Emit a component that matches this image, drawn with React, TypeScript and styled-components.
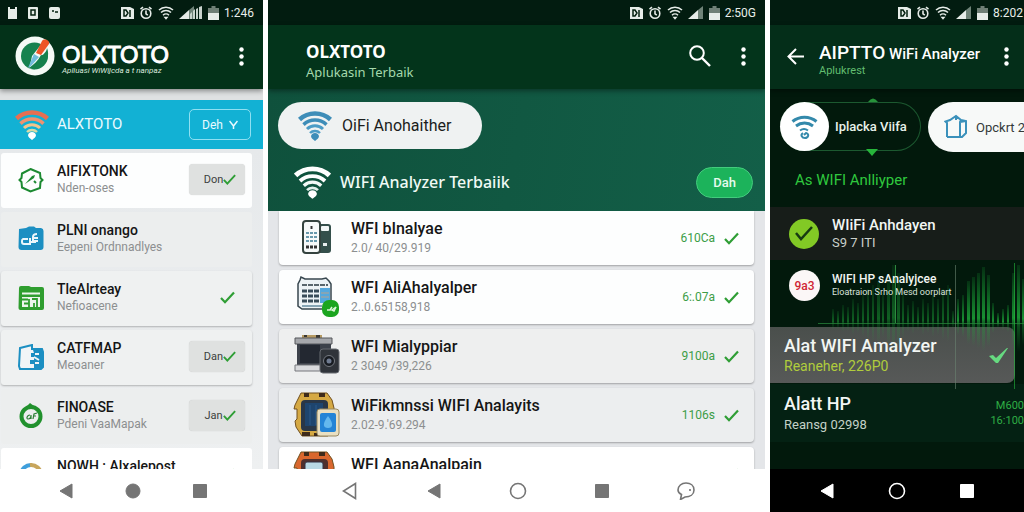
import React from "react";
import styled, { createGlobalStyle, css } from "styled-components";

const GlobalStyle = createGlobalStyle`
  *, *::before, *::after { box-sizing: border-box; }
  body {
    margin: 0;
    background: #fff;
    font-family: Roboto, "Liberation Sans", sans-serif;
    -webkit-font-smoothing: antialiased;
  }
  button { font-family: inherit; padding: 0; border: 0; background: none; color: inherit; cursor: pointer; }
  h1, h2, h3, p, ul { margin: 0; padding: 0; }
  ul { list-style: none; }
  svg { display: block; flex: none; }
`;

/* ---------- shared shell ---------- */

const Screens = styled.main`
  display: grid;
  grid-template-columns: 263fr 497fr 254fr;
  gap: 5px;
  height: 100vh;
  min-height: 320px;
`;

const Phone = styled.section<{ $bg: string }>`
  display: flex;
  flex-direction: column;
  min-width: 0;
  min-height: 0;
  overflow: hidden;
  background: ${(p) => p.$bg};
`;

const StatusBar = styled.div<{ $right?: number }>`
  display: flex;
  flex: none;
  align-items: center;
  gap: 5px;
  height: 25px;
  padding: 0 ${(p) => p.$right ?? 9}px 0 8px;
  background: #021c10;
  color: #e8eeea;
`;

const StatusSpacer = styled.span`
  flex: 1;
`;

const Clock = styled.time`
  font-size: 12px;
  line-height: 16px;
`;

const AppBar = styled.header<{ $bg: string; $pad: string }>`
  position: relative;
  z-index: 1;
  display: flex;
  flex: none;
  align-items: center;
  height: 64px;
  padding: ${(p) => p.$pad};
  background: ${(p) => p.$bg};
  color: #fff;
  box-shadow: 0 2px 5px rgba(0, 0, 0, 0.4);
`;

const Heading = styled.div<{ $pad: string }>`
  flex: 1;
  min-width: 0;
  padding: ${(p) => p.$pad};
  white-space: nowrap;
`;

const IconButton = styled.button<{ $w: number }>`
  display: flex;
  flex: none;
  align-items: center;
  justify-content: center;
  width: ${(p) => p.$w}px;
  height: 32px;
`;

const NavBar = styled.nav<{ $dark?: boolean; $gap: number; $left?: number }>`
  display: flex;
  flex: none;
  align-items: center;
  justify-content: center;
  gap: ${(p) => p.$gap}px;
  height: 43px;
  padding-left: ${(p) => p.$left || 0}px;
  background: ${(p) => (p.$dark ? "#000" : "#fff")};
  color: ${(p) => (p.$dark ? "#fff" : "#757575")};
`;

/* ---------- icons ---------- */

const StatusIcons = ({ double }: { double?: boolean }) => (
  <>
    <svg width="13" height="14" viewBox="0 0 13 14">
      <path d="M0 1h9l4 2v10H0z" fill="#e6ece8" />
      <path d="M3 4v6h2l2-3-2-3zM9 4v7" stroke="#04200f" strokeWidth="1.5" fill="none" />
    </svg>
    <svg width="14" height="14" viewBox="0 0 14 14" fill="none" stroke="#e6ece8" strokeWidth="1.6">
      <circle cx="7" cy="7.5" r="4.8" />
      <path d="M7 4.5v3.3l1.8 1.4M1.5 3.2 4 1.2M12.5 3.2 10 1.2" />
    </svg>
    <svg width="16" height="14" viewBox="0 0 16 14" fill="none" stroke="#e6ece8" strokeWidth="1.5">
      <path d="M1 4a10 10 0 0 1 14 0M3 6.6a7 7 0 0 1 10 0M5 9.2a4.3 4.3 0 0 1 6 0" />
      <path d="m5.5 10.8 2.5 3 2.5-3z" fill="#e6ece8" stroke="none" />
    </svg>
    <svg width={double ? 24 : 16} height="14" viewBox={double ? "0 0 24 14" : "0 0 16 14"}>
      <path d="M0 13 10 4v9z" fill="#e6ece8" />
      <path d="M10 13V4l5-4v13z" fill="#6f8378" />
      {double && <path d="M11 13V8l2-2v7zM14 13V5l2-2v10zM17 13V3l2-1v11zM20 13V1l3-1v13z" fill="#c9d3cd" />}
    </svg>
    <svg width="11" height="14" viewBox="0 0 11 14">
      <path d="M3.5 0h4v2H11v12H0V2h3.5z" fill="#6f7f76" />
      <path d="M0 7h11v7H0z" fill="#e6ece8" />
    </svg>
  </>
);

const LeftNotifications = () => (
  <svg width="54" height="12" viewBox="0 0 54 12">
    <path d="M0 0h2v2h5V0h2v12H0z" fill="#e6ece8" />
    <rect x="20" y="0" width="10" height="12" rx="1" fill="#e6ece8" />
    <rect x="23" y="3" width="4" height="5" fill="none" stroke="#04200f" strokeWidth="1.5" />
    <rect x="41" y="0" width="11" height="12" rx="2" fill="#e6ece8" />
    <path d="M44 4h2M47 5h3" stroke="#04200f" strokeWidth="1.5" />
  </svg>
);

const Dots = () => (
  <svg width="5" height="19" viewBox="0 0 5 19" fill="#fff">
    <circle cx="2.5" cy="2.5" r="2.2" />
    <circle cx="2.5" cy="9.5" r="2.2" />
    <circle cx="2.5" cy="16.5" r="2.2" />
  </svg>
);

const Check = ({ color = "#2f9e35", size = 15 }: { color?: string; size?: number }) => (
  <svg width={size} height={size} viewBox="0 0 15 15" fill="none" stroke={color} strokeWidth="2.2">
    <path d="m1 8 4 4.2L14 2.5" />
  </svg>
);

const Wifi = ({ colors, size = 34 }: { colors: string[]; size?: number }) => (
  <svg width={size} height={Math.round((size * 30) / 34)} viewBox="0 0 34 30" fill="none">
    <path d="M1.5 8.5a23 23 0 0 1 31 0" stroke={colors[0]} strokeWidth="4.5" />
    <path d="M5.5 13.6a17 17 0 0 1 23 0" stroke={colors[1]} strokeWidth="3.5" />
    <path d="M9 18a11.5 11.5 0 0 1 16 0" stroke={colors[2]} strokeWidth="3" />
    <path d="M12 22a7 7 0 0 1 10 0" stroke={colors[3]} strokeWidth="2.5" />
    <path d="M13 25a4.2 4.2 0 0 1 8 0c0 2.5-2 3-4 5-2-2-4-2.5-4-5z" fill={colors[4]} />
  </svg>
);

const Logo = () => (
  <svg width="40" height="40" viewBox="0 0 40 40">
    <circle cx="20" cy="20" r="19.5" fill="#f5faf6" />
    <circle cx="19.5" cy="20" r="13.5" fill="#17824f" />
    <path d="M17 20 29 5l8 6-11 16c-4 3-8 5-12 7z" fill="#f5faf6" />
    <path d="M21 17 27 5c2-3 8-1 7 3l-8 11z" fill="#ee5526" />
    <path d="M26 19c2 1 6-4 6-7 3 7 0 17-8 20-4 2-8 1-10 0 4-3 9-7 12-13z" fill="#14804c" />
    <path d="m19 18 5 3-8 9-3 2z" fill="#72bddc" />
  </svg>
);

const HexIcon = () => (
  <svg width="26" height="26" viewBox="0 0 26 26" fill="none" stroke="#1c8a31" strokeWidth="2">
    <path d="M12.500 2 22 6l.5 5 2 2-2 2-.5 6-9.500 3.500L4 20.500 3.500 15l-2-2 2-2L4 6.500z" />
    <path d="m7 17 7-8 3-1-1 3-6 4z" fill="#1c8a31" stroke="none" />
    <path d="m16 14 2 2" />
  </svg>
);

const BlueFolder = () => (
  <svg width="26" height="25" viewBox="0 0 26 25">
    <path d="M1 3 8 2l3-1.5h5L18 2h5a3 3 0 0 1 2.5 3v16a3 3 0 0 1-3 3h-19A3 3 0 0 1 .5 21z" fill="#1c8fc2" />
    <path d="M10 13H5a2 2 0 0 0-1 2v1a2 2 0 0 0 2 2h6v-6M13 16h2v-5c0-2 1-3 4-3M16 12h4M17 17v-2h3" fill="none" stroke="#eaf6fb" strokeWidth="2" />
  </svg>
);

const GreenCalendar = () => (
  <svg width="26" height="26" viewBox="0 0 26 26">
    <path d="M1 3a2 2 0 0 1 2-2h8l2 1h11a2 2 0 0 1 2 2v19a2 2 0 0 1-2 2H2a2 2 0 0 1-1.5-2z" fill="#2f9e2f" />
    <path d="M4 8.5h18" stroke="#edf5ed" strokeWidth="2" />
    <path d="M4 12h18v10H4z" fill="#edf5ed" />
    <path d="M4 14.5h6M6 18.5h5M11 14v8M14 14h5v8M16 18v4" fill="none" stroke="#2f9e2f" strokeWidth="1.8" />
  </svg>
);

const BlueDocs = () => (
  <svg width="26" height="26" viewBox="0 0 26 26">
    <path d="M2 4 14 1v4h10l1 3v15l-2 2H2L1 22z" fill="#f1f5f7" stroke="#1c8fc2" strokeWidth="2" />
    <path d="M15 6h9v18h-8v-4h-4v-4h4v-3h-3V9h3z" fill="#1c8fc2" />
    <path d="M17 10h4M16 13l5 3M17 19h4" stroke="#f1f5f7" strokeWidth="2" />
  </svg>
);

const GreenRing = () => (
  <svg width="26" height="26" viewBox="0 0 26 26" fill="none">
    <path d="m9 3 3-3 4 3z" fill="#21912d" />
    <circle cx="13" cy="13.5" r="9.5" stroke="#21912d" strokeWidth="4" />
    <path d="M12 12c-3 0-4 4-2 4s3-2 3-4v4M15 16l1-5 3-1M15 13h3" stroke="#2b7e35" strokeWidth="1.2" />
  </svg>
);

const HalfRing = () => (
  <svg width="26" height="26" viewBox="0 0 26 26" fill="none" strokeWidth="4">
    <path d="M3 13A10 10 0 0 1 14 3" stroke="#3f9fdc" />
    <path d="M12 3a10 10 0 0 1 11 10" stroke="#c8a65c" />
    <path d="M3 13a10 10 0 0 0 20 0" stroke="#5fa7c9" />
  </svg>
);

const RemoteArt = () => (
  <svg width="50" height="46" viewBox="0 0 50 46">
    <rect x="27" y="9" width="14" height="29" rx="3" fill="#344f4b" />
    <rect x="31" y="11" width="8" height="5" rx="1" fill="#f2f6f6" />
    <rect x="33" y="28" width="4" height="3" fill="#e8eeee" />
    <rect x="13" y="6" width="17" height="32" rx="3" fill="#f6f9f9" stroke="#34433f" strokeWidth="2" />
    <path d="M21.5 11v3" stroke="#333" strokeWidth="2" />
    <path d="M16 18h11M16 22h11M16 26h11" stroke="#6999ac" strokeWidth="2" strokeDasharray="3 1" />
    <path d="M16 32h11" stroke="#333" strokeWidth="3" strokeDasharray="3 1" />
  </svg>
);

const CalendarArt = () => (
  <svg width="50" height="46" viewBox="0 0 50 46">
    <path d="M10 6 11 3l4 2h17l4-1 3 3 2 3v25H12l-4-3V10z" fill="#edf3f6" stroke="#38474f" strokeWidth="1.5" />
    <path d="M12 11h26" stroke="#59666d" strokeWidth="2" strokeDasharray="5 1" />
    <path d="M30 14h10v15H30z" fill="#55a8dd" />
    <path d="M12 17h17M12 22h17M12 27h17" stroke="#394c59" strokeWidth="3" strokeDasharray="5 1" />
    <path d="M12 32h20M31 19h8M31 23h8" stroke="#86a5b5" strokeWidth="2" />
    <rect x="32" y="26" width="17" height="17" rx="7" fill="#1ba51f" />
    <path d="M37 36h3l2-3M42 36l4-3-2 4z" stroke="#d9f5d5" strokeWidth="1.5" fill="none" />
  </svg>
);

const CameraArt = () => (
  <svg width="50" height="46" viewBox="0 0 50 46">
    <path d="M12 2h20v5H12z" fill="#b69a62" />
    <path d="M14 2h3v2h-3zM26 2h4v3h-4z" fill="#3b3831" />
    <path d="M5 5h37v6H5z" fill="#a5a7ab" stroke="#55565b" />
    <path d="M7 11h34v24H7z" fill="#3c414a" />
    <path d="M10 12h20v18H10z" fill="#232831" />
    <path d="M5 32h27v6H5z" fill="#d9dadd" stroke="#77797d" />
    <rect x="30" y="16" width="19" height="24" rx="3" fill="#30343a" stroke="#666a70" />
    <circle cx="39" cy="28" r="5.5" fill="#171b21" stroke="#777b82" />
    <circle cx="39" cy="28" r="2.5" fill="#707c91" />
  </svg>
);

const WatchArt = ({ orange }: { orange?: boolean }) => {
  const c = orange ? "#d9672e" : "#d5a944";
  return (
    <svg width="50" height="46" viewBox="0 0 50 46">
      <path d="M11 1h26l5 7 2 8v14l-6 14H12L6 35l-1-6 2-2V17H4l1-4z" fill={c} stroke="#71501f" />
      <path d="M14 1h5v4h-5zM29 1h6v4h-6zM12 40h8v4h-8zM24 41h5v3h-5z" fill="#3e2b1b" />
      <rect x="11" y="8" width="27" height="31" rx="4" fill={orange ? "#4f302d" : "#293747"} />
      {orange ? (
        <rect x="15" y="11" width="18" height="14" rx="2" fill="#b9d9e4" stroke="#334" />
      ) : (
        <>
          <path d="M15 11h18v23H15z" fill="#1e456e" />
          <path d="M20 13v20M26 13v20" stroke="#2a5b8a" />
          <rect x="27" y="17" width="22" height="27" rx="3" fill="#e9dfc1" stroke="#998960" />
          <rect x="30" y="21" width="16" height="19" rx="2" fill="#2384d6" />
          <path d="M38 24c6 8 5 12 0 12s-6-4 0-12z" fill="#63b8ee" />
        </>
      )}
    </svg>
  );
};

const NavGlyph = ({ kind }: { kind: "back" | "backOutline" | "home" | "ring" | "square" | "chat" }) => (
  <svg width="18" height="18" viewBox="0 0 18 18" fill="none" stroke="currentColor" strokeWidth="1.6">
    {kind === "back" && <path d="M15 2v14L3 9z" fill="currentColor" strokeWidth="1" />}
    {kind === "backOutline" && <path d="M14.5 1.5v15L2.5 9z" />}
    {kind === "home" && <circle cx="9" cy="9" r="7" fill="currentColor" strokeWidth="1" />}
    {kind === "ring" && <circle cx="9" cy="9" r="7.5" />}
    {kind === "square" && <path d="M2.5 2.5h13v13h-13z" fill="currentColor" strokeWidth="1" />}
    {kind === "chat" && (
      <path d="M4.5 12.500 3.500 17.500 8 15c5 0 9-2.500 9-7s-3.500-7-8-7-8 3-8 7c0 2 1.500 3.500 3.500 4.500zM13 7v2" />
    )}
  </svg>
);

/* ---------- left screen ---------- */

const BrandName = styled.h1`
  font: 400 23px/22px Lato, sans-serif;
  -webkit-text-stroke: 1px #fff;
`;

const BrandTag = styled.p`
  font-size: 8px;
  line-height: 12px;
  font-style: italic;
  color: #dbe8de;
`;

const FeatureBar = styled.div`
  display: flex;
  flex: none;
  align-items: center;
  height: 49px;
  margin-top: 11px;
  padding: 0 12px 0 15px;
  background: #12b1d4;
  color: #eafaff;
`;

const FeatureName = styled.h2`
  flex: 1;
  margin-left: 8px;
  padding-bottom: 2px;
  font-size: 15px;
  line-height: 20px;
  font-weight: 400;
`;

const OutlineButton = styled.button`
  display: flex;
  align-items: center;
  justify-content: center;
  gap: 6px;
  width: 62px;
  height: 31px;
  border: 1px solid #8fe0f2;
  border-radius: 5px;
  font-size: 12px;
`;

const LeftList = styled.ul`
  flex: 1;
  min-height: 0;
  overflow: hidden;
  padding: 4px 11px 0 1px;
  background: linear-gradient(#e6e9eb, #eef0f1);
`;

const AppCard = styled.li<{ $bg: string; $raised?: boolean }>`
  display: flex;
  align-items: center;
  height: 55px;
  margin-bottom: 4px;
  padding: 0 7px 2px 17px;
  border-radius: 3px;
  background: ${(p) => p.$bg};
  ${(p) => p.$raised && css`box-shadow: 0 1px 2px rgba(0, 0, 0, 0.25);`}
`;

const CardText = styled.div<{ $left: number }>`
  flex: 1;
  min-width: 0;
  margin-left: ${(p) => p.$left}px;
  white-space: nowrap;
`;

const AppTitle = styled.h3`
  font-size: 14px;
  line-height: 18px;
  font-weight: 500;
  color: #151515;
`;

const AppSub = styled.p`
  min-height: 17px;
  font-size: 12px;
  line-height: 17px;
  color: #8c8f90;
`;

const DoneButton = styled.button`
  display: flex;
  align-items: center;
  justify-content: center;
  width: 56px;
  height: 31px;
  padding-left: 6px;
  border-radius: 4px;
  background: #dfe1e0;
  box-shadow: 0 0 1px rgba(0, 0, 0, 0.2);
  font-size: 11px;
  color: #3c3f3d;
`;

const CheckSlot = styled.span`
  padding-right: 10px;
`;

/* ---------- middle screen ---------- */

const MidTitle = styled.h1`
  font: 700 17px/20px "Noto Sans", sans-serif;
`;

const MidSub = styled.p`
  font: 400 13px/20px "Noto Sans", sans-serif;
  color: #a5d9ad;
`;

const Hero = styled.div`
  flex: none;
  height: 122px;
  padding: 13px 12px 0 10px;
  background: linear-gradient(100deg, #0f513c, #135f48);
`;

const SearchPill = styled.button`
  display: flex;
  align-items: center;
  gap: 10px;
  width: 204px;
  height: 47px;
  padding-left: 20px;
  border-radius: 24px;
  background: #eff2f2;
  font-size: 16px;
  color: #1b1d1c;
`;

const HeroRow = styled.div`
  display: flex;
  align-items: center;
  height: 68px;
  padding: 0 0 2px 16px;
`;

const HeroTitle = styled.h2`
  flex: 1;
  margin-left: 9px;
  font: 500 16px/24px "Noto Sans", sans-serif;
  color: #f0faf5;
`;

const GreenButton = styled.button`
  width: 57px;
  height: 31px;
  border: 1px solid #43cc7d;
  border-radius: 16px;
  background: #1cb35b;
  font-size: 13px;
  font-weight: 500;
  color: #e6fbee;
`;

const MidList = styled.ul`
  flex: 1;
  min-height: 0;
  overflow: hidden;
  padding: 0 11px;
  background: #e4e6e9;
`;

const ToolCard = styled.li<{ $bg: string }>`
  display: flex;
  align-items: center;
  height: 54px;
  margin-bottom: 5px;
  padding: 0 15px 0 11px;
  border-radius: 4px;
  background: ${(p) => p.$bg};
  box-shadow: 0 1px 2px rgba(0, 0, 0, 0.3);
  &:first-child { border-radius: 0 0 4px 4px; }
`;

const ToolTitle = styled.h3`
  font-size: 16px;
  line-height: 20px;
  font-weight: 500;
  color: #161616;
`;

const ToolSub = styled.p`
  min-height: 18px;
  font-size: 12px;
  line-height: 18px;
  color: #8c8f90;
`;

const Score = styled.span`
  margin-right: 9px;
  font-size: 12px;
  color: #3c9d47;
`;

/* ---------- right screen ---------- */

const RightHeading = styled.h1`
  font-size: 15px;
  line-height: 22px;
  font-weight: 500;
  strong { font-size: 19px; font-weight: 500; }
`;

const RightSub = styled.p`
  font-size: 11px;
  line-height: 12px;
  color: #62bd70;
`;

const ChipRow = styled.div`
  display: flex;
  flex: none;
  gap: 7px;
  height: 76px;
  padding: 13px 0 0 10px;
`;

const DarkChip = styled.button`
  position: relative;
  display: flex;
  flex: none;
  align-items: center;
  width: 141px;
  height: 49px;
  border: 1px solid #1c5930;
  border-left: 0;
  border-radius: 25px;
  font-size: 13px;
  font-weight: 500;
  color: #e8f2ea;
`;

const Disc = styled.span<{ $size: number; $bg: string }>`
  position: relative;
  z-index: 2;
  display: flex;
  flex: none;
  align-items: center;
  justify-content: center;
  width: ${(p) => p.$size}px;
  height: ${(p) => p.$size}px;
  border-radius: 50%;
  background: ${(p) => p.$bg};
  font-size: 12px;
  font-weight: 500;
  color: #d02635;
`;

const ChipLabel = styled.span`
  margin-left: 6px;
  white-space: nowrap;
`;

const Marker = styled.svg<{ $bottom?: boolean }>`
  position: absolute;
  right: 42px;
  ${(p) => (p.$bottom ? "bottom: -6px;" : "top: -5px;")}
`;

const LightChip = styled.button`
  display: flex;
  flex: none;
  align-items: center;
  gap: 8px;
  width: 130px;
  height: 50px;
  padding-left: 16px;
  border-radius: 25px;
  background: #f7f9f8;
  font-size: 13px;
  color: #333a3a;
  white-space: nowrap;
`;

const SectionTitle = styled.h2`
  flex: none;
  height: 42px;
  padding: 5px 0 0 25px;
  font-size: 15px;
  line-height: 20px;
  font-weight: 400;
  color: #2fc83e;
`;

const RightBody = styled.div`
  position: relative;
  flex: 1;
  min-height: 0;
  overflow: hidden;
`;

const Spectrum = styled.svg`
  position: absolute;
  top: 56px;
  right: 0;
  z-index: 1;
  pointer-events: none;
`;

const RightRow = styled.div<{ $h: number; $bg?: string; $pad: number; $lift?: number }>`
  display: flex;
  align-items: center;
  height: ${(p) => p.$h}px;
  padding-left: ${(p) => p.$pad}px;
  padding-bottom: ${(p) => p.$lift || 0}px;
  background: ${(p) => p.$bg || "transparent"};
  white-space: nowrap;
`;

const RowText = styled.div<{ $left?: number }>`
  position: relative;
  z-index: 2;
  flex: 1;
  margin-left: ${(p) => p.$left || 0}px;
`;

const RowTitle = styled.h3<{ $size: number; $line: number }>`
  font-size: ${(p) => p.$size}px;
  line-height: ${(p) => p.$line}px;
  font-weight: 500;
  color: #f2f6f3;
`;

const RowSub = styled.p<{ $size: number; $line: number; $color: string }>`
  font-size: ${(p) => p.$size}px;
  line-height: ${(p) => p.$line}px;
  color: ${(p) => p.$color};
`;

const SelectedRow = styled(RightRow)`
  margin: 4px 9px 1px 0;
  padding-right: 6px;
  border-radius: 0 8px 8px 0;
  background: linear-gradient(#4a4f4c, #575958);
  svg { position: relative; z-index: 2; }
`;

const Prices = styled.p`
  font-size: 11px;
  line-height: 15px;
  text-align: right;
  color: #2fae45;
  span { display: block; }
`;

/* ---------- data ---------- */

const apps = [
  { icon: <HexIcon />, title: "AIFIXTONK", sub: "Nden-oses", bg: "#fdfefe", action: "Don" },
  { icon: <BlueFolder />, title: "PLNI onango", sub: "Eepeni Ordnnadlyes", bg: "#eceeee" },
  { icon: <GreenCalendar />, title: "TleAlrteay", sub: "Nefioacene", bg: "#eff1f1", raised: true, check: true },
  { icon: <BlueDocs />, title: "CATFMAP", sub: "Meoaner", bg: "#eff1f1", raised: true, action: "Dan" },
  { icon: <GreenRing />, title: "FINOASE", sub: "Pdeni VaaMapak", bg: "#eceeee", action: "Jan" },
  { icon: <HalfRing />, title: "NOWH : Alxalepost", sub: "", bg: "#fff", check: true },
];

const tools = [
  { icon: <RemoteArt />, title: "WFI bInalyae", sub: "2.0/ 40/29.919", score: "610Ca", bg: "#fdfefe" },
  { icon: <CalendarArt />, title: "WFI AliAhalyalper", sub: "2..0.65158,918", score: "6:.07a", bg: "#fdfefe" },
  { icon: <CameraArt />, title: "WFI Mialyppiar", sub: "2 3049 /39,226", score: "9100a", bg: "#eeefef" },
  { icon: <WatchArt />, title: "WiFikmnssi WIFI Analayits", sub: "2.02-9.'69.294", score: "1106s", bg: "#eceeef" },
  { icon: <WatchArt orange />, title: "WFI AanaAnalpain", sub: "", score: "990.4s", bg: "#fff" },
];

const peaks = [
  14, 12, 18, 16, 24, 20, 28, 34, 38, 42, 30, 46, 58, 50, 30, 18, 22, 16, 24, 20, 28, 24, 34, 38, 12, 24, 28, 42, 46,
  50, 56, 48, 20, 10, 14, 18, 50, 58, 44,
];

const blues = ["#3d8db8", "#3d8db8", "#4b9cc6", "#4b9cc6", "#3d8db8"];
const whites = ["#fff", "#fff", "#f4faf7", "#e4f1ec", "#fff"];

export default function App() {
  return (
    <>
      <GlobalStyle />
      <Screens>
        <Phone $bg="#dfe1e2">
          <StatusBar>
            <LeftNotifications />
            <StatusSpacer />
            <StatusIcons double />
            <Clock>1:246</Clock>
          </StatusBar>
          <AppBar $bg="#033219" $pad="0 7px 2px 15px">
            <Logo />
            <Heading $pad="7px 0 0 7px">
              <BrandName>OLXTOTO</BrandName>
              <BrandTag>Apliuasi WiWijcda a t nanpaz</BrandTag>
            </Heading>
            <IconButton $w={30} aria-label="More options"><Dots /></IconButton>
          </AppBar>
          <FeatureBar>
            <Wifi colors={["#e66f52", "#ee9270", "#f2c48c", "#d9dba6", "#fff"]} />
            <FeatureName>ALXTOTO</FeatureName>
            <OutlineButton>
              Deh
              <svg width="9" height="9" viewBox="0 0 9 9" fill="none" stroke="currentColor" strokeWidth="1.5">
                <path d="m.5 1 4 5 4-5M4.5 6v3" />
              </svg>
            </OutlineButton>
          </FeatureBar>
          <LeftList>
            {apps.map((a) => (
              <AppCard key={a.title} $bg={a.bg} $raised={a.raised}>
                {a.icon}
                <CardText $left={13}>
                  <AppTitle>{a.title}</AppTitle>
                  <AppSub>{a.sub}</AppSub>
                </CardText>
                {a.action && <DoneButton>{a.action}<Check size={13} /></DoneButton>}
                {a.check && <CheckSlot><Check /></CheckSlot>}
              </AppCard>
            ))}
          </LeftList>
          <NavBar $gap={49} $left={3}>
            <IconButton $w={18} aria-label="Back"><NavGlyph kind="back" /></IconButton>
            <IconButton $w={18} aria-label="Home"><NavGlyph kind="home" /></IconButton>
            <IconButton $w={18} aria-label="Recent apps"><NavGlyph kind="square" /></IconButton>
          </NavBar>
        </Phone>

        <Phone $bg="#e4e6e9">
          <StatusBar>
            <StatusSpacer />
            <StatusIcons />
            <Clock>2:50G</Clock>
          </StatusBar>
          <AppBar $bg="#03341b" $pad="0 7px 2px 38px">
            <Heading $pad="12px 0 0 0">
              <MidTitle>OLXTOTO</MidTitle>
              <MidSub>Aplukasin Terbaik</MidSub>
            </Heading>
            <IconButton $w={56} aria-label="Search">
              <svg width="22" height="22" viewBox="0 0 22 22" fill="none" stroke="#fff" strokeWidth="2">
                <circle cx="8" cy="8" r="6.8" />
                <path d="m13 13 8 8" strokeWidth="2.4" />
              </svg>
            </IconButton>
            <IconButton $w={30} aria-label="More options"><Dots /></IconButton>
          </AppBar>
          <Hero>
            <SearchPill><Wifi colors={blues} />OiFi Anohaither</SearchPill>
            <HeroRow>
              <Wifi colors={whites} size={37} />
              <HeroTitle>WIFI Analyzer Terbaiik</HeroTitle>
              <GreenButton>Dah</GreenButton>
            </HeroRow>
          </Hero>
          <MidList>
            {tools.map((t) => (
              <ToolCard key={t.title} $bg={t.bg}>
                {t.icon}
                <CardText $left={11}>
                  <ToolTitle>{t.title}</ToolTitle>
                  <ToolSub>{t.sub}</ToolSub>
                </CardText>
                <Score>{t.score}</Score>
                <Check />
              </ToolCard>
            ))}
          </MidList>
          <NavBar $gap={66} $left={2}>
            <IconButton $w={18} aria-label="Previous"><NavGlyph kind="backOutline" /></IconButton>
            <IconButton $w={18} aria-label="Back"><NavGlyph kind="back" /></IconButton>
            <IconButton $w={18} aria-label="Home"><NavGlyph kind="ring" /></IconButton>
            <IconButton $w={18} aria-label="Recent apps"><NavGlyph kind="square" /></IconButton>
            <IconButton $w={18} aria-label="Messages"><NavGlyph kind="chat" /></IconButton>
          </NavBar>
        </Phone>

        <Phone $bg="#02190c">
          <StatusBar $right={1}>
            <StatusSpacer />
            <StatusIcons />
            <Clock>8:202</Clock>
          </StatusBar>
          <AppBar $bg="#042e19" $pad="0 3px 2px 9px">
            <IconButton $w={32} aria-label="Back">
              <svg width="17" height="17" viewBox="0 0 17 17" fill="none" stroke="#fff" strokeWidth="2">
                <path d="M9 1 1.5 8.5 9 16M1.5 8.5H17" />
              </svg>
            </IconButton>
            <Heading $pad="7px 0 0 8px">
              <RightHeading><strong>AIPTTO</strong> WiFi Analyzer</RightHeading>
              <RightSub>Aplukrest</RightSub>
            </Heading>
            <IconButton $w={30} aria-label="More options"><Dots /></IconButton>
          </AppBar>
          <ChipRow>
            <DarkChip>
              <Disc $size={49} $bg="#fff">
                <svg width="27" height="24" viewBox="0 0 27 24" fill="none" stroke="#3389ab" strokeWidth="3">
                  <path d="M1.5 6.5a19 19 0 0 1 24 0M5 11a14 14 0 0 1 17 0" />
                  <path d="M9 15.5q4-3 8 0M12 18c-3 2-1 5 2 5s5-4 1-5l-2 2" strokeWidth="2" />
                </svg>
              </Disc>
              <ChipLabel>Iplacka Viifa</ChipLabel>
              <Marker width="10" height="4" viewBox="0 0 10 4"><path d="M0 4q5-7 10 0z" fill="#27923a" /></Marker>
              <Marker $bottom width="12" height="7" viewBox="0 0 12 7"><path d="M0 0h12L6 7z" fill="#27b53b" /></Marker>
            </DarkChip>
            <LightChip>
              <svg width="24" height="26" viewBox="0 0 24 26" fill="none" stroke="#3b91bb" strokeWidth="2">
                <path d="M3 23V9L1.500 7.500 6 6l6-4 5 4-1 2v15H3M12 2v4M17 6l5 1v12l-4 4h-2M16 8l6-1" />
              </svg>
              Opckrt 2
            </LightChip>
          </ChipRow>
          <SectionTitle>As WIFI Anlliyper</SectionTitle>
          <RightBody>
            <Spectrum width="206" height="128" viewBox="0 0 206 128">
              <defs>
                <linearGradient id="bar" x1="0" y1="0" x2="0" y2="1">
                  <stop offset="0" stopColor="#18b53a" stopOpacity="0.15" />
                  <stop offset="0.6" stopColor="#1fae3c" stopOpacity="0.8" />
                  <stop offset="0.7" stopColor="#1fae3c" stopOpacity="0.35" />
                  <stop offset="1" stopColor="#1fae3c" stopOpacity="0" />
                </linearGradient>
              </defs>
              {peaks.map((h, i) => (
                <rect
                  key={i}
                  x={14 + i * 5}
                  y={60 - h}
                  width={h > 40 ? 3 : 2}
                  height={h * 1.5}
                  fill="url(#bar)"
                  opacity={i > 24 ? 1 : 0.6}
                />
              ))}
              <path d="M0 60.5h206" stroke="#2b8b3f" strokeOpacity="0.7" />
              <path d="M77.5 2v58" stroke="#39a54c" strokeOpacity="0.8" />
              <path d="M137.5 2v124" stroke="#6b8371" strokeOpacity="0.6" />
              <path d="M196.5 0v126" stroke="#24b83c" strokeOpacity="0.6" />
            </Spectrum>
            <RightRow $h={53} $bg="#171d19" $pad={19}>
              <Disc $size={30} $bg="#82c925">
                <svg width="18" height="15" viewBox="0 0 18 15" fill="none" stroke="#173b12" strokeWidth="2.5">
                  <path d="m1 7 5 6L17 1" />
                </svg>
              </Disc>
              <RowText $left={13}>
                <RowTitle $size={15} $line={18}>WIiFi Anhdayen</RowTitle>
                <RowSub $size={13} $line={17} $color="#c9d0cb">S9 7 ITI</RowSub>
              </RowText>
            </RightRow>
            <RightRow $h={63} $pad={19} $lift={12}>
              <Disc $size={31} $bg="#fbf7f7">9a3</Disc>
              <RowText $left={12}>
                <RowTitle $size={12} $line={13}>WIFI HP sAnalyjcee</RowTitle>
                <RowSub $size={9} $line={13} $color="#dbe3dd">Eloatraion Srho Mesd oorplart</RowSub>
              </RowText>
            </RightRow>
            <SelectedRow $h={56} $pad={14}>
              <RowText>
                <RowTitle $size={18} $line={22}>Alat WIFI Amalyzer</RowTitle>
                <RowSub $size={14} $line={19} $color="#b0cc3c">Reaneher, 226P0</RowSub>
              </RowText>
              <svg width="20" height="17" viewBox="0 0 20 17" fill="#66da80">
                <path d="m0 9 4-1 3 3L18 1h1L9 16H7z" />
              </svg>
            </SelectedRow>
            <RightRow $h={58} $bg="#042113" $pad={14}>
              <RowText>
                <RowTitle $size={18} $line={22}>Alatt HP</RowTitle>
                <RowSub $size={13} $line={19} $color="#c3d1c7">Reansg 02998</RowSub>
              </RowText>
              <Prices><span>M600</span><span>16:100</span></Prices>
            </RightRow>
          </RightBody>
          <NavBar $dark $gap={52}>
            <IconButton $w={18} aria-label="Back"><NavGlyph kind="back" /></IconButton>
            <IconButton $w={18} aria-label="Home"><NavGlyph kind="ring" /></IconButton>
            <IconButton $w={18} aria-label="Recent apps"><NavGlyph kind="square" /></IconButton>
          </NavBar>
        </Phone>
      </Screens>
    </>
  );
}
